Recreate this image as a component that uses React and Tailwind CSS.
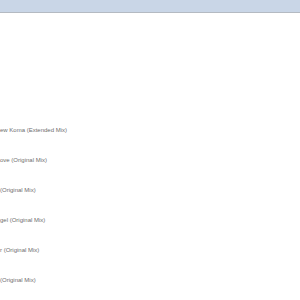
const tracks = [
  "ew Koma (Extended Mix)",
  "ove (Original Mix)",
  "(Original Mix)",
  "gel (Original Mix)",
  "r (Original Mix)",
  "(Original Mix)",
];

export default function App() {
  return (
    <div className="w-[300px] h-[300px] overflow-hidden bg-white font-['Liberation_Sans',Arial,sans-serif]">
      <div className="h-[13px] bg-[#c9d6e7] border-b border-[#b4bac2]" />
      <ul className="pt-[102px]">
        {tracks.map((t, i) => (
          <li key={i} className="h-[30px] flex items-center text-[6px] text-[#6e6e6e] whitespace-nowrap">
            {t}
          </li>
        ))}
      </ul>
    </div>
  );
}
